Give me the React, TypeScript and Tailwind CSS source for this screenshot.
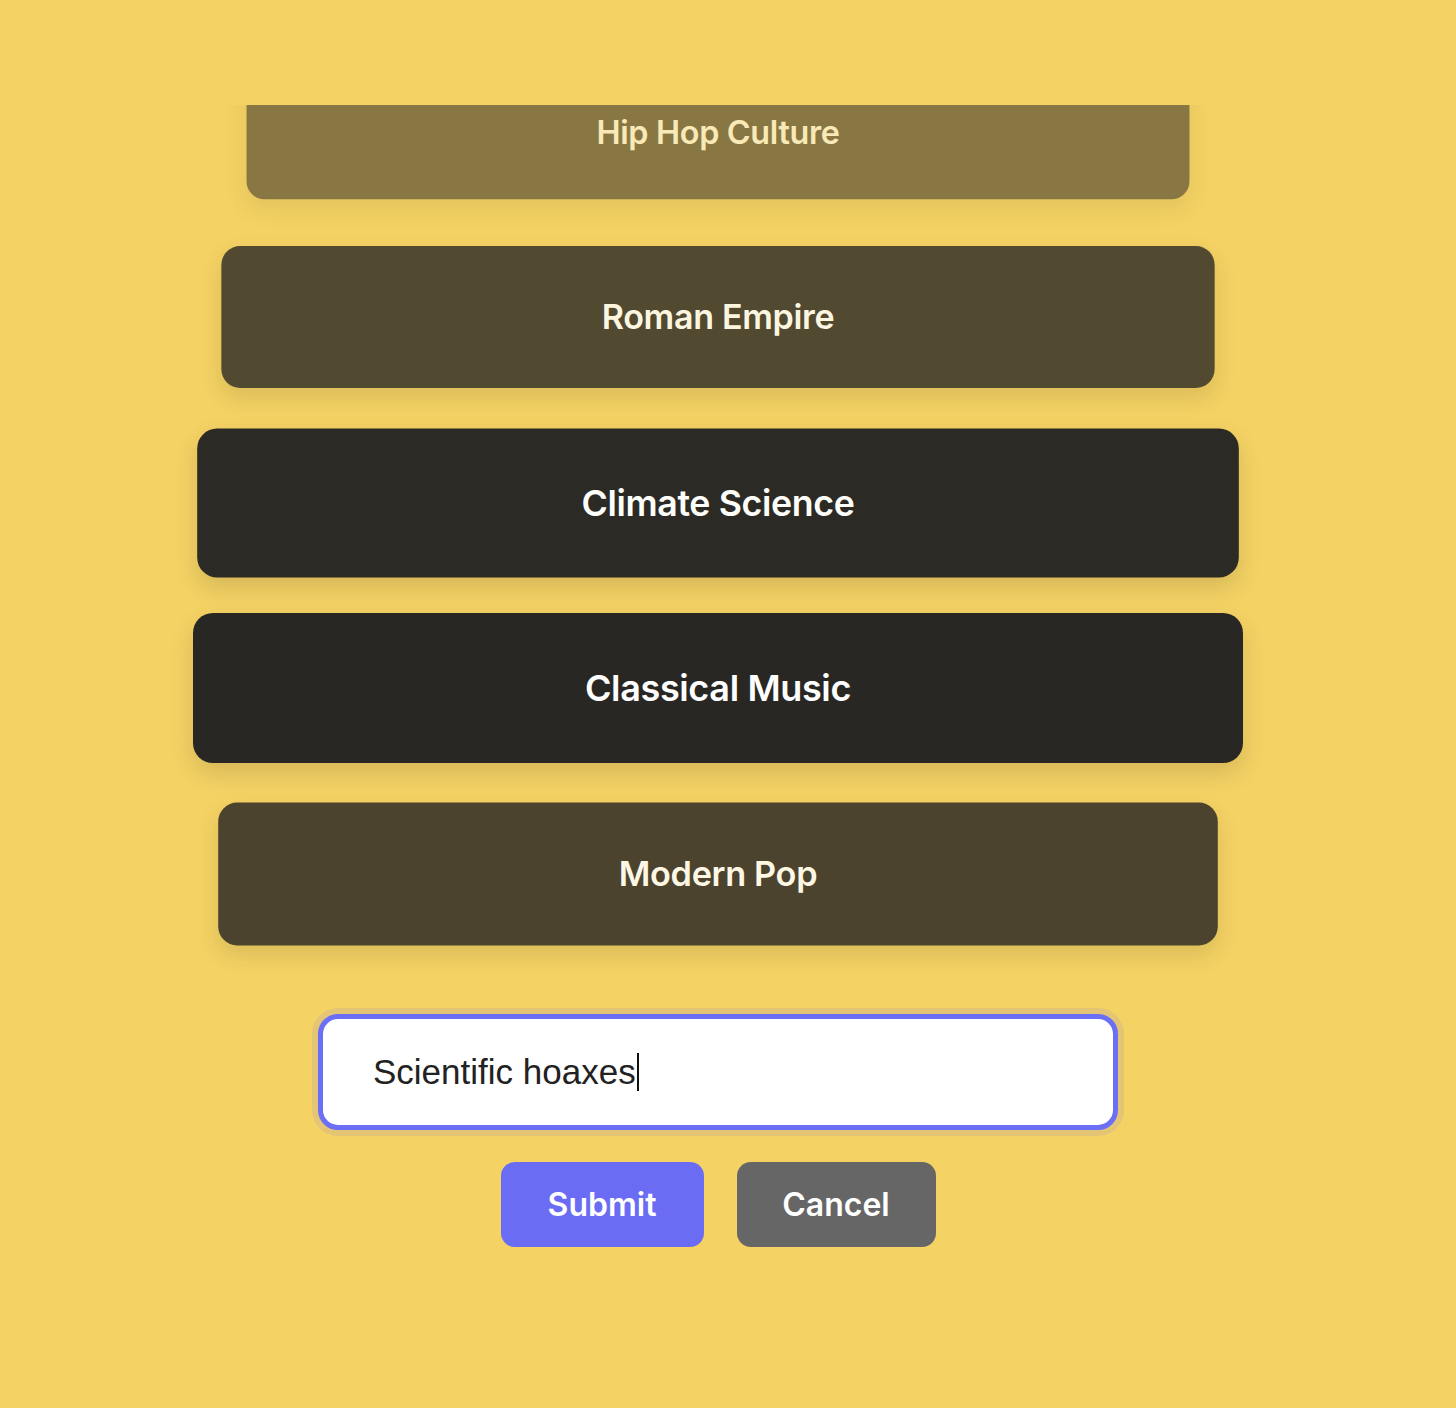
type Topic = { label: string; cls: string };

const TOPICS: Topic[] = [
  { label: "Hip Hop Culture", cls: "scale-[0.898] opacity-[0.53]" },
  { label: "Roman Empire", cls: "scale-[0.946] opacity-[0.8]" },
  { label: "Climate Science", cls: "scale-[0.992] opacity-[0.98]" },
  { label: "Classical Music", cls: "scale-100 opacity-100" },
  { label: "Modern Pop", cls: "scale-[0.952] opacity-[0.83]" },
];

export default function App() {
  return (
    <div
      className="flex min-h-screen flex-col items-center bg-[#F4D264] pr-5"
      style={{ fontFamily: "Inter, 'Noto Sans', sans-serif" }}
    >
      <div className="mt-[105px] h-[880px] w-full overflow-hidden">
        <div className="-mt-[48.5px] flex flex-col items-center gap-[35.5px]">
          {TOPICS.map((t) => (
            <div
              key={t.label}
              className={`flex h-[150px] w-[1050px] shrink-0 items-center justify-center rounded-[20px] bg-[#292724] shadow-[0_10px_24px_rgba(0,0,0,0.13)] ${t.cls}`}
            >
              <span className="text-[36px] font-semibold tracking-[-0.01em] text-white">
                {t.label}
              </span>
            </div>
          ))}
        </div>
      </div>

      <div className="mt-[29px] flex h-[116px] w-[800px] items-center rounded-[20px] border-[5px] border-[#6B6EF6] bg-white pl-[50px] ring-[6px] ring-[rgba(107,110,246,0.12)]">
        <span
          className="text-[35px] text-[#222]"
          style={{ fontFamily: "'Liberation Sans', Arial, sans-serif" }}
        >
          Scientific hoaxes
        </span>
        <span className="ml-px h-[38px] w-[2px] bg-[#111]" aria-hidden />
      </div>

      <div className="mt-8 flex gap-[33px]">
        <button className="h-[85px] w-[203px] rounded-[14px] bg-[#6A6DF4] text-[32px] font-semibold text-white">
          Submit
        </button>
        <button className="h-[85px] w-[199px] rounded-[14px] bg-[#666666] text-[32px] font-semibold text-white">
          Cancel
        </button>
      </div>
    </div>
  );
}
